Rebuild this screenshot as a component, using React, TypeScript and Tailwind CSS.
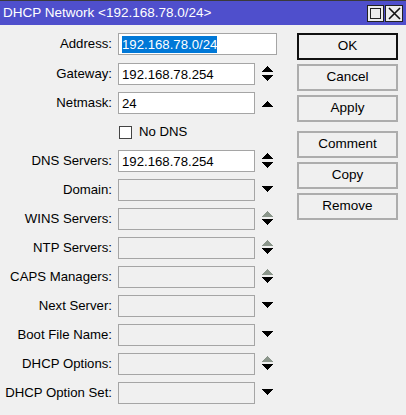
import React from "react";

type Arrow = "updown" | "up" | "down" | "updown-dis" | "none";

function ArrowIcon({ kind }: { kind: Arrow }) {
  if (kind === "none") return <div className="w-[12px] h-[22px]" />;
  return (
    <svg width="12" height="22" viewBox="0 0 12 22" shapeRendering="crispEdges" className="block">
      {kind === "updown" && (
        <>
          <polygon points="6,3 12,9 0,9" fill="#000" />
          <polygon points="0,12 12,12 6,18" fill="#000" />
        </>
      )}
      {kind === "updown-dis" && (
        <>
          <polygon points="6,3 12,9 0,9" fill="#8c978c" />
          <polygon points="0,11 12,11 6,17" fill="#000" />
        </>
      )}
      {kind === "up" && <polygon points="6,9 12,15 0,15" fill="#000" />}
      {kind === "down" && <polygon points="0,7 12,7 6,13" fill="#000" />}
    </svg>
  );
}

function Row({
  label,
  value,
  arrow,
  disabled,
  wide,
  selected,
  mt,
}: {
  label: string;
  value?: string;
  arrow: Arrow;
  disabled?: boolean;
  wide?: boolean;
  selected?: boolean;
  mt: string;
}) {
  return (
    <div className={`flex items-center h-[22px] ${mt}`}>
      <div className="w-[112px] text-right whitespace-nowrap text-[13.2px] leading-[22px] text-black">{label}</div>
      <div
        className={`ml-[6px] h-[22px] border border-[#a5a5a5] flex items-center pl-[3px] text-[13.2px] text-black ${
          disabled ? "bg-[#f0f0f0]" : "bg-white"
        } ${wide ? "w-[159px]" : "w-[137px]"}`}
      >
        {selected ? (
          <span className="bg-[#0078d7] text-white leading-[17px] h-[17px]">{value}</span>
        ) : (
          <span className="leading-[17px]">{value}</span>
        )}
      </div>
      {!wide && (
        <div className="ml-[6px]">
          <ArrowIcon kind={arrow} />
        </div>
      )}
    </div>
  );
}

function Btn({ children, primary, mt }: { children: React.ReactNode; primary?: boolean; mt: string }) {
  return (
    <div
      className={`w-[101px] h-[27px] flex items-center justify-center text-[13.5px] text-black bg-[#f0f0f0] border-2 ${
        primary ? "border-[#111]" : "border-[#adadad]"
      } ${mt}`}
    >
      {children}
    </div>
  );
}

export default function App() {
  return (
    <div
      className="w-[406px] h-[415px] bg-[#f0f0f0] flex flex-col overflow-hidden"
      style={{ fontFamily: '"Liberation Sans", Arial, sans-serif' }}
    >
      <div className="h-[25px] bg-[#4f4fcc] border-t border-[#3a3a3a] flex items-center justify-between pl-[3px] pr-[3px]">
        <span className="text-white text-[13.5px] leading-none whitespace-nowrap">DHCP Network &lt;192.168.78.0/24&gt;</span>
        <div className="flex gap-[1px]">
          <div className="w-[17px] h-[17px] bg-[#ececec] border border-[#222] flex items-center justify-center">
            <div className="w-[11px] h-[11px] border border-[#222]" />
          </div>
          <div className="w-[18px] h-[17px] bg-[#ececec] border border-[#222] flex items-center justify-center">
            <svg width="13" height="13" viewBox="0 0 13 13">
              <path d="M1 1 L12 12 M12 1 L1 12" stroke="#111" strokeWidth="1.6" />
            </svg>
          </div>
        </div>
      </div>
      <div className="flex pt-[8px]">
        <div className="flex flex-col">
          <Row label="Address:" value="192.168.78.0/24" arrow="none" wide selected mt="" />
          <Row label="Gateway:" value="192.168.78.254" arrow="updown" mt="mt-[8px]" />
          <Row label="Netmask:" value="24" arrow="up" mt="mt-[7px]" />
          <div className="flex items-center h-[22px] mt-[7px]">
            <div className="ml-[119px] w-[13px] h-[13px] bg-white border border-[#444]" />
            <span className="ml-[7px] text-[13.2px] text-black">No DNS</span>
          </div>
          <Row label="DNS Servers:" value="192.168.78.254" arrow="updown" mt="mt-[7px]" />
          <Row label="Domain:" arrow="down" disabled mt="mt-[7px]" />
          <Row label="WINS Servers:" arrow="updown-dis" disabled mt="mt-[7px]" />
          <Row label="NTP Servers:" arrow="updown-dis" disabled mt="mt-[7px]" />
          <Row label="CAPS Managers:" arrow="updown-dis" disabled mt="mt-[7px]" />
          <Row label="Next Server:" arrow="down" disabled mt="mt-[7px]" />
          <Row label="Boot File Name:" arrow="down" disabled mt="mt-[7px]" />
          <Row label="DHCP Options:" arrow="updown-dis" disabled mt="mt-[7px]" />
          <Row label="DHCP Option Set:" arrow="down" disabled mt="mt-[7px]" />
        </div>
        <div className="flex flex-col ml-[20px]">
          <Btn primary mt="">OK</Btn>
          <Btn mt="mt-[4px]">Cancel</Btn>
          <Btn mt="mt-[4px]">Apply</Btn>
          <Btn mt="mt-[9px]">Comment</Btn>
          <Btn mt="mt-[4px]">Copy</Btn>
          <Btn mt="mt-[4px]">Remove</Btn>
        </div>
      </div>
    </div>
  );
}
